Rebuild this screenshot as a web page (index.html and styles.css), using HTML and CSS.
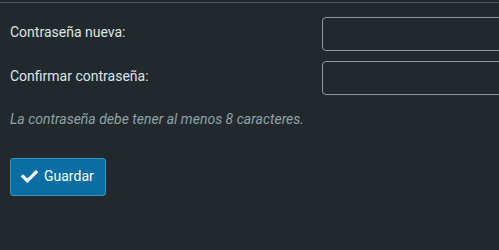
FILE: index.html
```html
<!DOCTYPE html>
<html lang="es">
<head>
<meta charset="utf-8">
<link rel="stylesheet" href="styles.css">
</head>
<body>
<div class="page">
  <form class="form">
    <div class="row">
      <label class="label" for="p1">Contraseña nueva:</label>
      <input class="input" id="p1" type="password">
    </div>
    <div class="row">
      <label class="label" for="p2">Confirmar contraseña:</label>
      <input class="input" id="p2" type="password">
    </div>
    <p class="hint">La contraseña debe tener al menos 8 caracteres.</p>
    <div class="actions">
      <button class="btn" type="button">
        <svg class="icon" viewBox="0 0 512 512" width="17" height="17" aria-hidden="true"><path fill="#fff" d="M173.9 439.4l-166.4-166.4c-10-10-10-26.2 0-36.2l36.2-36.2c10-10 26.2-10 36.2 0L192 312.7 432.1 72.6c10-10 26.2-10 36.2 0l36.2 36.2c10 10 10 26.2 0 36.2l-294.4 294.4c-10 10-26.2 10-36.2 0z"/></svg>
        <span>Guardar</span>
      </button>
    </div>
  </form>
</div>
</body>
</html>
```

FILE: styles.css
```css
html, body {
  margin: 0;
  padding: 0;
  background: #22292d;
  height: 100%;
  overflow: hidden;
}
.page {
  margin-top: 2px;
  border-top: 1px solid #4c565d;
  padding: 14px 0 0 10px;
  font-family: Roboto, "Liberation Sans", sans-serif;
  font-size: 14px;
  color: #dde4e7;
}
.form {
  display: flex;
  flex-direction: column;
}
.row {
  display: grid;
  grid-template-columns: 312px 200px;
  align-items: center;
  height: 34px;
  margin-bottom: 10px;
}
.label {
  color: #dde4e7;
  padding-bottom: 4px;
}
.input {
  box-sizing: border-box;
  height: 34px;
  width: 200px;
  background: #22292d;
  border: 1px solid #8b9ba1;
  border-radius: 4px;
  margin: 0;
}
.hint {
  margin: 6px 0 0;
  font-style: italic;
  color: #8fa2a9;
  line-height: 16px;
}
.actions {
  margin-top: 31px;
}
.btn {
  display: inline-flex;
  align-items: center;
  gap: 6px;
  box-sizing: border-box;
  height: 38px;
  width: 96px;
  padding: 0 0 2px 10px;
  background: #0a6ea4;
  border: 1px solid #3a93c6;
  border-radius: 3px;
  color: #fff;
  font-family: Roboto, "Liberation Sans", sans-serif;
  font-size: 14px;
}
.icon {
  display: block;
}
```
